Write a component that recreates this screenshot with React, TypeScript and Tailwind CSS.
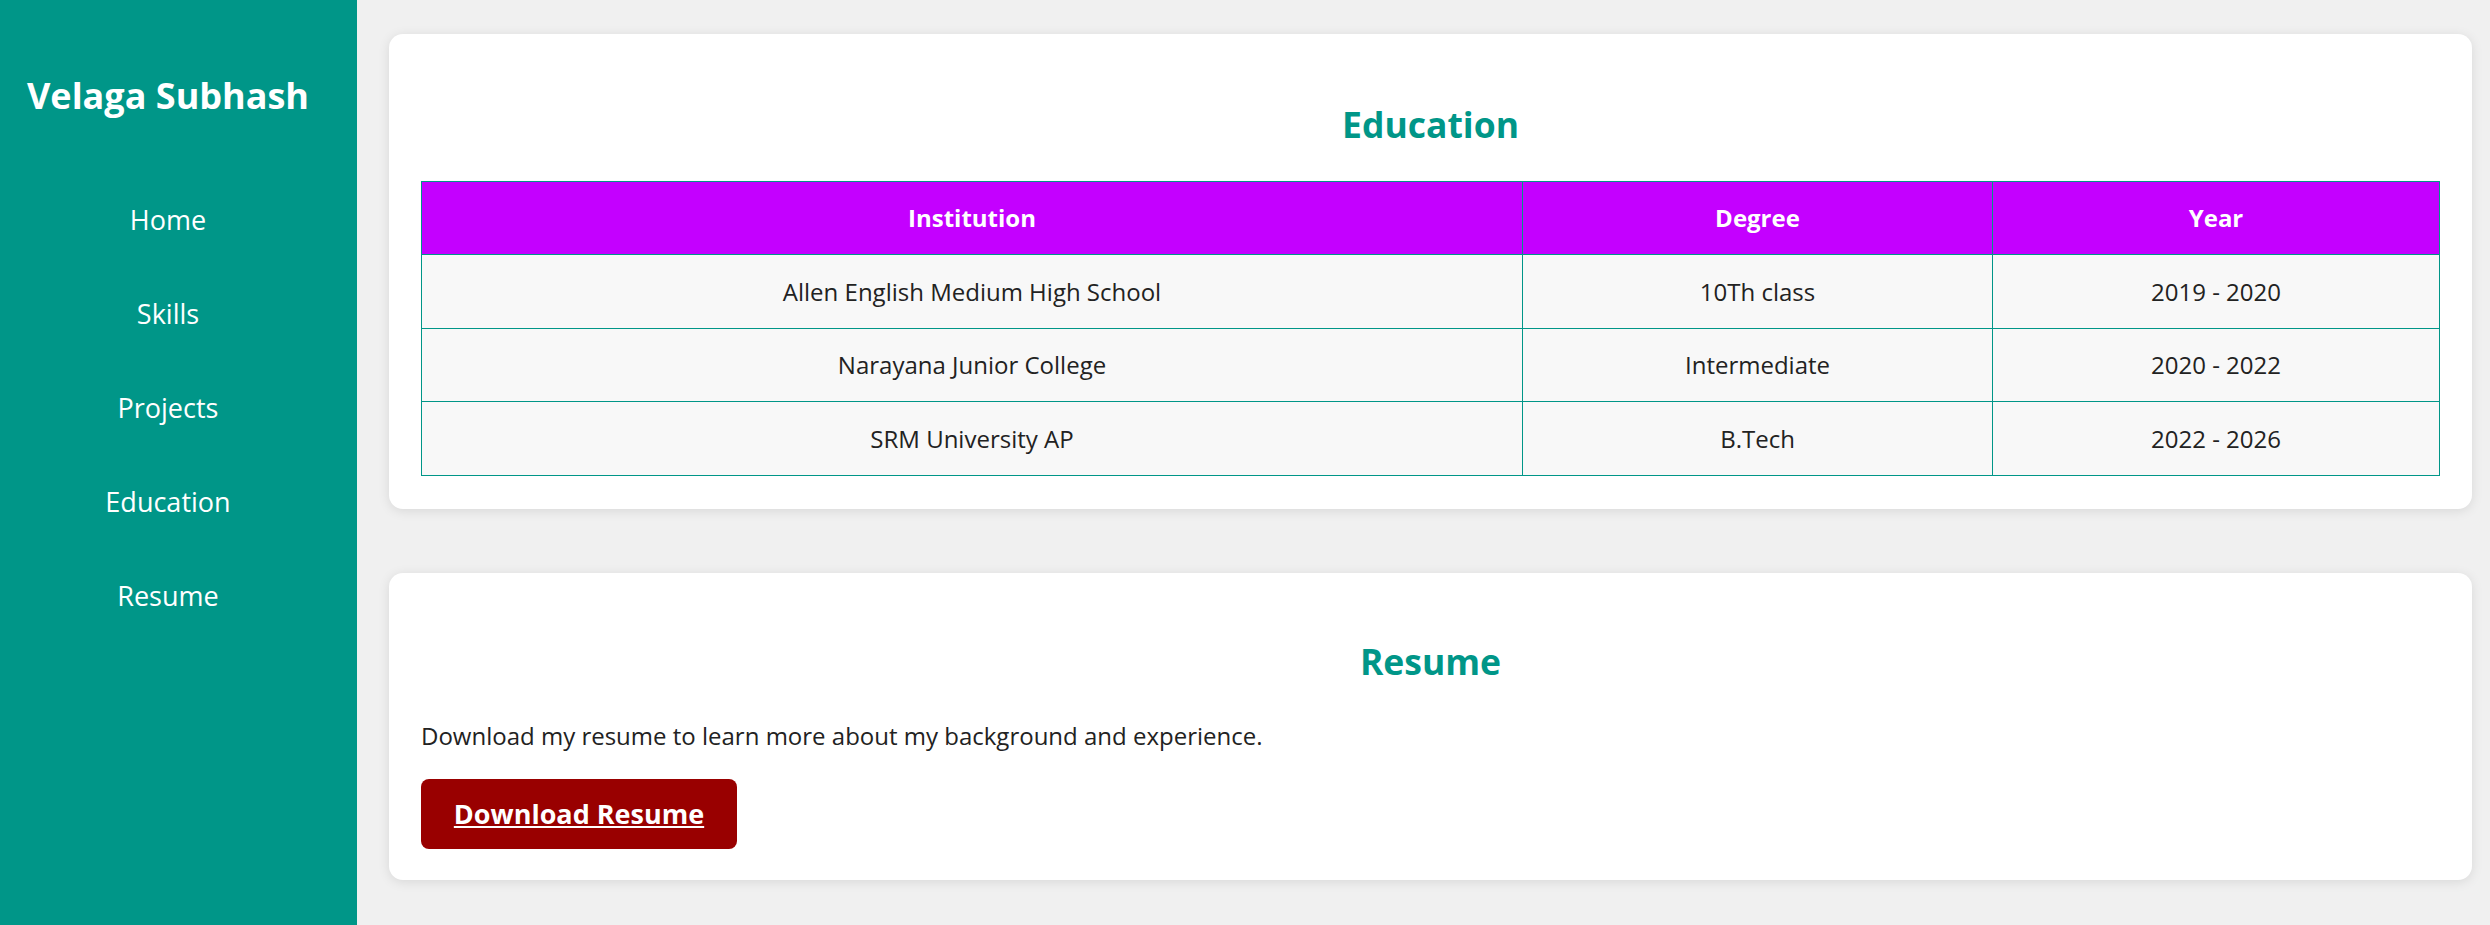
const navLinks = ["Home", "Skills", "Projects", "Education", "Resume"];

const education = [
  { institution: "Allen English Medium High School", degree: "10Th class", year: "2019 - 2020" },
  { institution: "Narayana Junior College", degree: "Intermediate", year: "2020 - 2022" },
  { institution: "SRM University AP", degree: "B.Tech", year: "2022 - 2026" },
];

const App = () => {
  return (
    <div className="flex h-[925px] bg-[#f0f0f0] font-['Open_Sans',sans-serif] text-[24px] text-[#222]">
      {/* Sidebar */}
      <aside className="w-[357px] shrink-0 bg-[#009688] text-white pr-[21px]">
        <h1 className="mt-[74px] text-center text-[36px] leading-[44px] font-bold">
          Velaga Subhash
        </h1>

        <ul className="mt-[55px] flex flex-col text-[27px]">
          {navLinks.map((link) => (
            <li key={link} className="h-[94px] leading-[94px] text-center">
              <a href={`#${link.toLowerCase()}`}>{link}</a>
            </li>
          ))}
        </ul>
      </aside>

      {/* Main content */}
      <main className="flex-1 pl-[32px] pr-[18px] pt-[34px] flex flex-col gap-[64px]">
        <section
          id="education"
          className="bg-white rounded-[14px] shadow-[0_2px_12px_rgba(0,0,0,0.1)] px-[32px] pt-[64px] pb-[33px]"
        >
          <h2 className="text-center text-[35.5px] leading-[52px] font-bold text-[#009688] mb-[31px]">
            Education
          </h2>

          <table className="w-full border-collapse border border-[#009688] text-center">
            <thead>
              <tr className="h-[73px] bg-[#c400ff] text-white">
                <th className="w-[1101px] border border-[#009688] font-bold">Institution</th>
                <th className="w-[470px] border border-[#009688] font-bold">Degree</th>
                <th className="border border-[#009688] font-bold">Year</th>
              </tr>
            </thead>
            <tbody>
              {education.map((item, i) => (
                <tr
                  key={item.institution}
                  className={`${i % 2 === 0 ? "h-[74px]" : "h-[73px]"} bg-[#f8f8f8]`}
                >
                  <td className="border border-[#009688]">{item.institution}</td>
                  <td className="border border-[#009688]">{item.degree}</td>
                  <td className="border border-[#009688]">{item.year}</td>
                </tr>
              ))}
            </tbody>
          </table>
        </section>

        <section
          id="resume"
          className="bg-white rounded-[14px] shadow-[0_2px_12px_rgba(0,0,0,0.1)] px-[32px] pt-[62px] pb-[31px]"
        >
          <h2 className="text-center text-[35.5px] leading-[52px] font-bold text-[#009688] mb-[32px]">
            Resume
          </h2>

          <p className="leading-[34px] mb-[26px]">
            Download my resume to learn more about my background and experience.
          </p>

          <a
            href="#resume"
            className="inline-flex items-center justify-center w-[316px] h-[70px] rounded-[8px] bg-[#990000] text-white text-[27px] font-bold underline"
          >
            Download Resume
          </a>
        </section>
      </main>
    </div>
  );
};

export default App;
